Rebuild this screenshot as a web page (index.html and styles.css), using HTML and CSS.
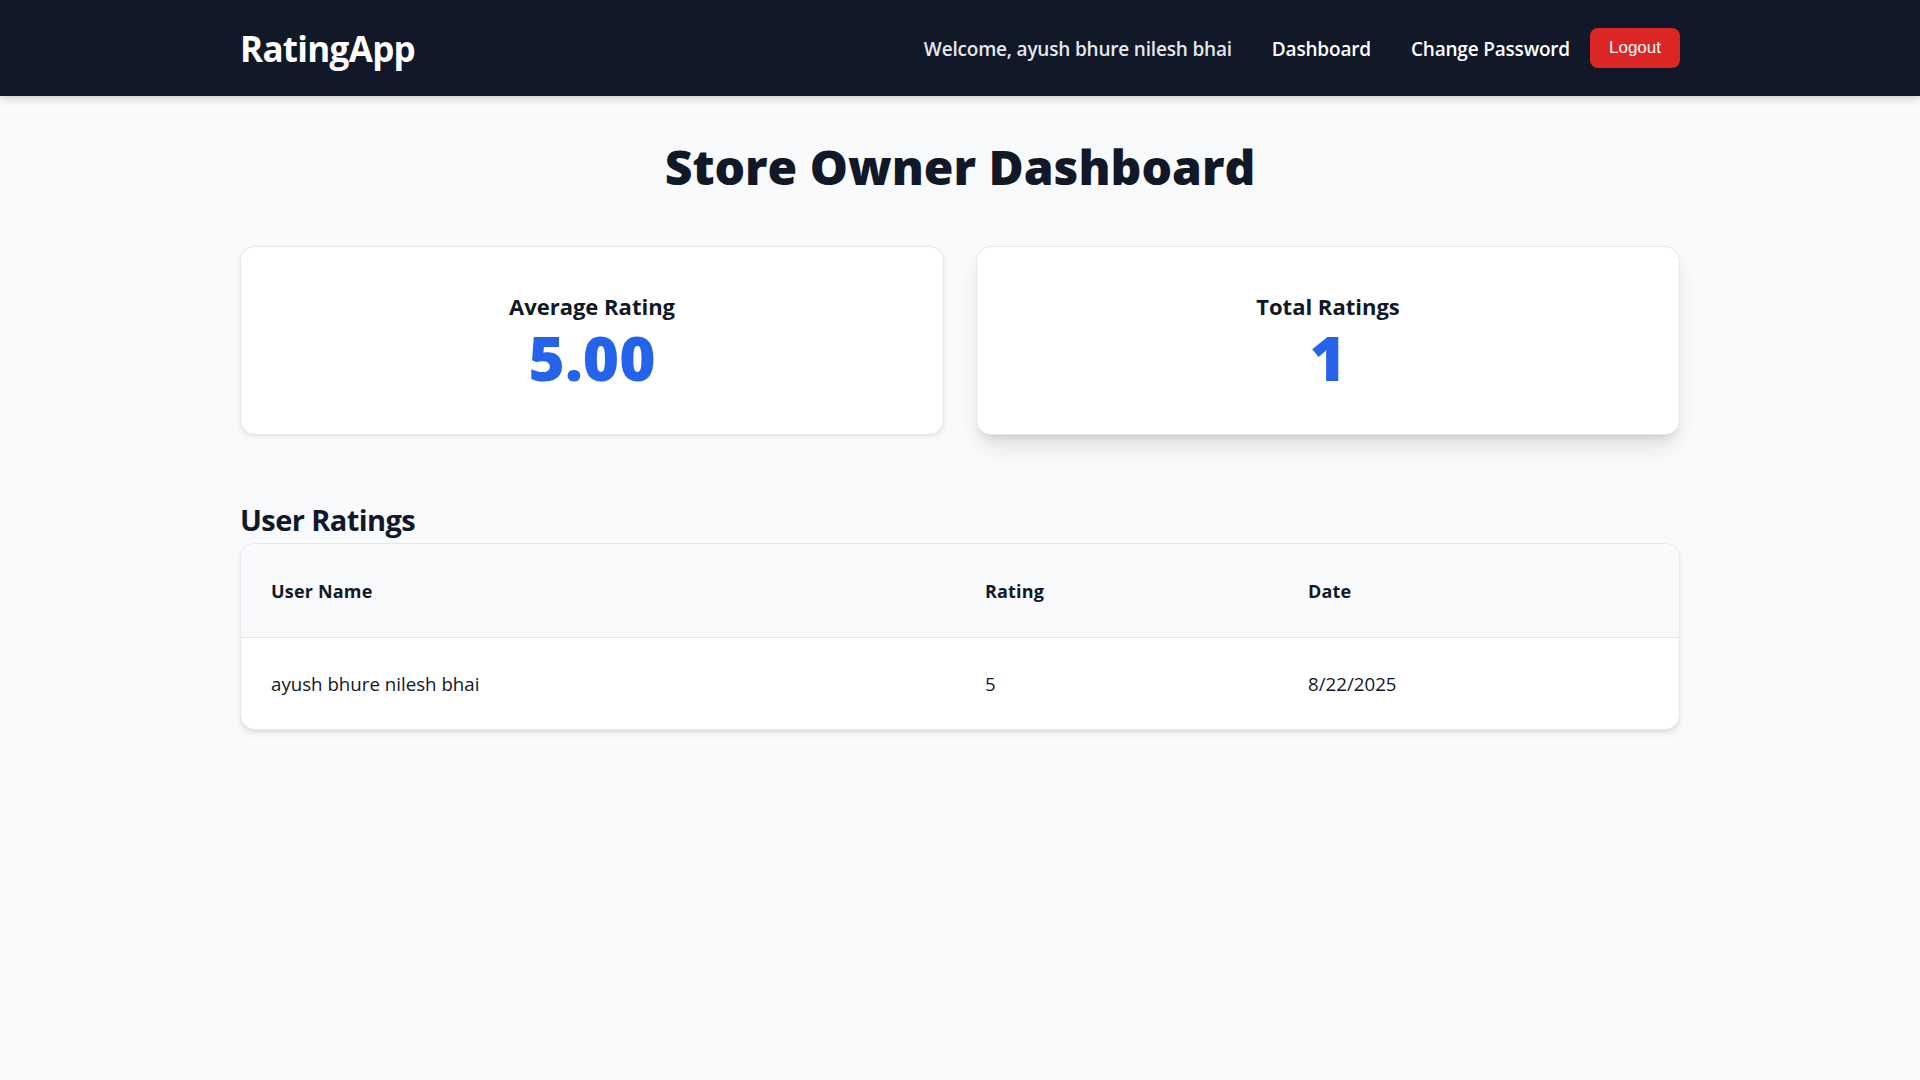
FILE: index.html
```html
<!DOCTYPE html>
<html lang="en">
<head>
<meta charset="utf-8">
<title>RatingApp - Store Owner Dashboard</title>
<link rel="stylesheet" href="styles.css">
</head>
<body>
<nav class="navbar">
  <div class="nav-inner">
    <a class="brand" href="#">RatingApp</a>
    <div class="nav-links">
      <span class="welcome">Welcome, ayush bhure nilesh bhai</span>
      <a class="nav-link" href="#">Dashboard</a>
      <a class="nav-link" href="#">Change Password</a>
      <button class="logout" type="button">Logout</button>
    </div>
  </div>
</nav>
<main class="page">
  <h1 class="page-title">Store Owner Dashboard</h1>
  <div class="stats">
    <div class="stat-card">
      <h3 class="stat-label">Average Rating</h3>
      <p class="stat-value">5.00</p>
    </div>
    <div class="stat-card stat-card-hover">
      <h3 class="stat-label">Total Ratings</h3>
      <p class="stat-value">1</p>
    </div>
  </div>
  <section class="ratings">
    <h2 class="section-title">User Ratings</h2>
    <div class="table-wrap">
      <table class="ratings-table">
        <thead>
          <tr>
            <th class="col-name">User Name</th>
            <th class="col-rating">Rating</th>
            <th class="col-date">Date</th>
          </tr>
        </thead>
        <tbody>
          <tr>
            <td>ayush bhure nilesh bhai</td>
            <td>5</td>
            <td>8/22/2025</td>
          </tr>
        </tbody>
      </table>
    </div>
  </section>
</main>
</body>
</html>
```
FILE: styles.css
```css
* { box-sizing: border-box; }
html, body { margin: 0; padding: 0; }
body {
  background: #f9fafb;
  font-family: "Open Sans", "Noto Sans", sans-serif;
  color: #111827;
  min-height: 1080px;
}
.navbar {
  height: 96px;
  background: #111827;
  box-shadow: 0 5px 8px -1px rgba(0,0,0,0.12), 0 2px 5px -2px rgba(0,0,0,0.1);
  position: relative;
}
.nav-inner {
  max-width: 1440px;
  height: 100%;
  margin: 0 auto;
  display: flex;
  align-items: center;
  justify-content: space-between;
}
.brand {
  color: #ffffff;
  text-decoration: none;
  font-size: 35px;
  font-weight: 700;
  letter-spacing: -0.02em;
  line-height: 1;
}
.nav-links {
  display: flex;
  align-items: center;
  gap: 20px;
  padding-top: 2px;
}
.welcome {
  color: #e5e7eb;
  font-size: 19px;
  font-weight: 600;
  letter-spacing: -0.01em;
}
.nav-link {
  margin-left: 20px;
  color: #ffffff;
  text-decoration: none;
  font-size: 19px;
  font-weight: 600;
  letter-spacing: -0.01em;
}
.logout {
  height: 40px;
  padding: 0 19px;
  border: none;
  border-radius: 8px;
  background: #dc2626;
  color: #ffffff;
  font-family: "Liberation Sans", Arial, sans-serif;
  font-size: 17px;
  margin-top: -3px;
  cursor: pointer;
}
.page {
  max-width: 1440px;
  margin: 0 auto;
  padding-top: 41px;
}
.page-title {
  margin: 0 0 49px;
  text-align: center;
  font-size: 48px;
  line-height: 60px;
  font-weight: 800;
  letter-spacing: 0;
  color: #111827;
}
.stats {
  display: grid;
  grid-template-columns: 1fr 1fr;
  gap: 32px;
}
.stat-card {
  background: #ffffff;
  border: 1px solid #e5e7eb;
  border-radius: 15px;
  box-shadow: 0 2px 6px rgba(0,0,0,0.06), 0 1px 3px rgba(0,0,0,0.05);
  padding: 42px 20px 47px;
  text-align: center;
}
.stat-card-hover {
  box-shadow: 0 14px 20px -4px rgba(0,0,0,0.12), 0 6px 9px -5px rgba(0,0,0,0.1);
}
.stat-label {
  margin: 0 0 3px;
  font-size: 22px;
  line-height: 35px;
  font-weight: 700;
  letter-spacing: 0;
  color: #111827;
}
.stat-value {
  margin: 0;
  font-size: 62px;
  line-height: 60px;
  font-weight: 800;
  letter-spacing: 0;
  color: #2563eb;
}
.ratings {
  margin-top: 65px;
}
.section-title {
  margin: 0 0 3px;
  font-size: 29px;
  line-height: 40px;
  font-weight: 700;
  letter-spacing: -0.02em;
  color: #111827;
}
.table-wrap {
  background: #ffffff;
  border: 1px solid #e5e7eb;
  border-radius: 15px;
  overflow: hidden;
  box-shadow: 0 4px 7px -1px rgba(0,0,0,0.1), 0 2px 4px -2px rgba(0,0,0,0.08);
}
.ratings-table {
  width: 100%;
  border-collapse: collapse;
  table-layout: fixed;
}
.ratings-table th {
  background: #f9fafb;
  height: 93px;
  padding: 2px 30px 0;
  text-align: left;
  font-size: 18px;
  font-weight: 700;
  letter-spacing: 0.01em;
  color: #111827;
  border-bottom: 1px solid #e5e7eb;
}
.ratings-table td {
  height: 92px;
  padding: 0 30px;
  font-size: 18.7px;
  font-weight: 400;
  letter-spacing: 0;
  color: #111827;
}
.col-name { width: 714px; }
.col-rating { width: 323px; }
```
